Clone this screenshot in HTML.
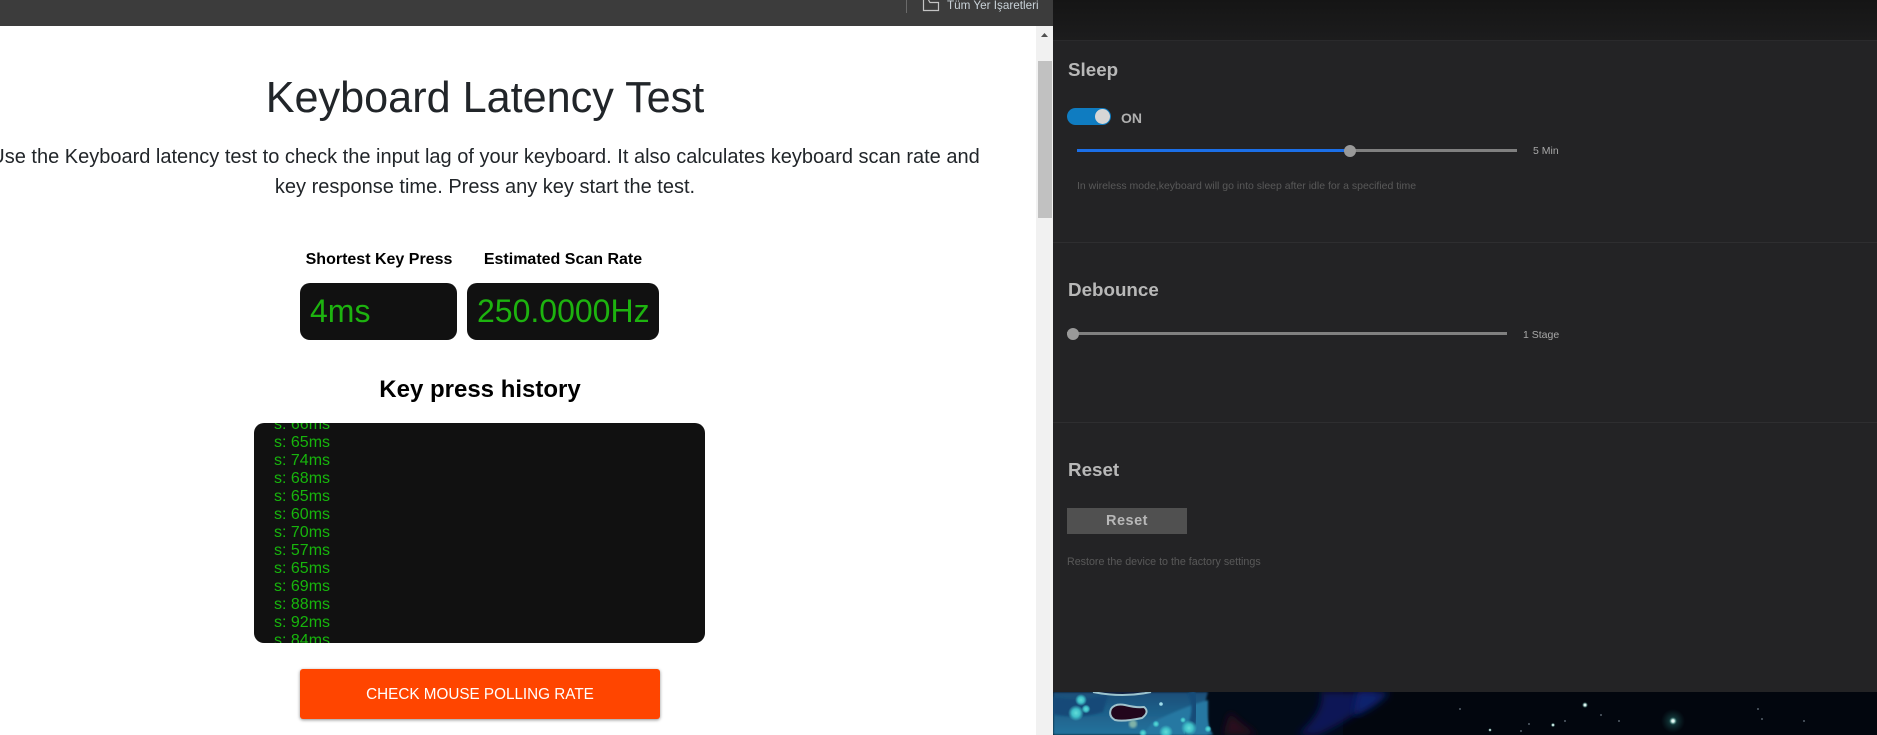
<!DOCTYPE html>
<html>
<head>
<meta charset="utf-8">
<style>
html,body{margin:0;padding:0;width:1877px;height:735px;overflow:hidden;background:#232325;font-family:"Liberation Sans",Arial,sans-serif}
.a{position:absolute;white-space:nowrap}
.c{position:absolute;white-space:nowrap;text-align:center}
.s{font-weight:bold;color:#b8b8b8;font-size:18.800px;line-height:22px;left:1068px}
.hint{color:#595959;font-size:10.500px;line-height:14px;left:1077px}
.val{color:#a8a8a8;font-size:10.500px;line-height:14px}
.line{position:absolute;left:1053px;right:0;height:1px;background:#2e2e30}
.h{color:#17b50c;font-size:16px;line-height:18px;left:274px}
</style>
</head>
<body>
<!-- browser toolbar -->
<div class="a" style="left:0;top:0;width:1053px;height:26px;background:#3c3c3c"></div>
<div class="a" style="left:906px;top:0;width:1px;height:13px;background:#6a6a6a"></div>
<svg class="a" style="left:922px;top:0" width="18" height="12" viewBox="0 0 18 12"><path d="M1.500 0V10.500H16.500V2.500H8L6.500 0" fill="none" stroke="#c4c4c4" stroke-width="1.200"/></svg>
<div class="a" style="left:947px;top:-2px;color:#c9d2d8;font-size:11.700px;line-height:16px">Tüm Yer İşaretleri</div>

<!-- white page -->
<div class="a" style="left:0;top:26px;width:1036px;height:709px;background:#fff;overflow:hidden"></div>
<div class="a" style="left:1036px;top:26px;width:17px;height:709px;background:#f1f1f1"></div>
<div class="a" style="left:1038px;top:61px;width:14px;height:157px;background:#c1c1c1"></div>
<svg class="a" style="left:1040px;top:32px" width="10" height="6"><path d="M4.500 1L8 5H1Z" fill="#505050"/></svg>

<div class="c" style="left:0;width:970px;top:70px;font-size:43.200px;line-height:56px;color:#212529">Keyboard Latency Test</div>
<div class="c" style="left:-20px;width:1010px;top:142px;font-size:20px;line-height:30px;color:#212529">Use the Keyboard latency test to check the input lag of your keyboard. It also calculates keyboard scan rate and</div>
<div class="c" style="left:-20px;width:1010px;top:172px;font-size:20px;line-height:30px;color:#212529">key response time. Press any key start the test.</div>

<div class="c" style="left:280px;width:198px;top:250px;font-size:16px;line-height:20px;font-weight:bold;color:#000">Shortest Key Press</div>
<div class="c" style="left:463px;width:200px;top:250px;font-size:16px;line-height:20px;font-weight:bold;color:#000">Estimated Scan Rate</div>

<div class="a" style="left:300px;top:283px;width:157px;height:57px;background:#111;border-radius:10px"></div>
<div class="a" style="left:467px;top:283px;width:192px;height:57px;background:#111;border-radius:10px"></div>
<div class="a" style="left:310px;top:292px;font-size:32px;line-height:38px;color:#1db30f">4ms</div>
<div class="a" style="left:477px;top:292px;font-size:32px;line-height:38px;color:#1db30f">250.0000Hz</div>

<div class="c" style="left:280px;width:400px;top:376px;font-size:24px;line-height:28px;font-weight:bold;color:#000">Key press history</div>

<div class="a" style="left:254px;top:423px;width:451px;height:220px;background:#111;border-radius:10px;overflow:hidden">
  <div class="a h" style="left:20px;top:-7px">s: 66ms</div>
  <div class="a h" style="left:20px;top:11px">s: 65ms</div>
  <div class="a h" style="left:20px;top:29px">s: 74ms</div>
  <div class="a h" style="left:20px;top:47px">s: 68ms</div>
  <div class="a h" style="left:20px;top:65px">s: 65ms</div>
  <div class="a h" style="left:20px;top:83px">s: 60ms</div>
  <div class="a h" style="left:20px;top:101px">s: 70ms</div>
  <div class="a h" style="left:20px;top:119px">s: 57ms</div>
  <div class="a h" style="left:20px;top:137px">s: 65ms</div>
  <div class="a h" style="left:20px;top:155px">s: 69ms</div>
  <div class="a h" style="left:20px;top:173px">s: 88ms</div>
  <div class="a h" style="left:20px;top:191px">s: 92ms</div>
  <div class="a h" style="left:20px;top:209px">s: 84ms</div>
</div>

<div class="c" style="left:300px;top:669px;width:360px;height:50px;line-height:51px;background:#ff4500;border-radius:3px;color:#fff;font-size:15.250px;box-shadow:0 1px 3px rgba(0,0,0,.45)">CHECK MOUSE POLLING RATE</div>

<!-- right panel -->
<div class="a" style="left:1053px;top:0;width:824px;height:41px;background:linear-gradient(#151515,#1c1c1d)"></div>
<div class="line" style="top:40px;background:#2a2a2c"></div>
<div class="a" style="left:1053px;top:41px;width:824px;height:651px;background:#232325"></div>
<div class="line" style="top:242px"></div>
<div class="line" style="top:422px"></div>

<div class="a s" style="top:59px">Sleep</div>
<div class="a" style="left:1067px;top:108px;width:44px;height:17px;border-radius:9px;background:#0f7cc1"></div>
<div class="a" style="left:1095px;top:109px;width:15px;height:15px;border-radius:50%;background:#d6d6d6"></div>
<div class="a" style="left:1121px;top:110px;font-size:14px;line-height:16px;font-weight:bold;color:#b0b0b0">ON</div>
<div class="a" style="left:1077px;top:149px;width:440px;height:3px;background:#808080"></div>
<div class="a" style="left:1077px;top:149px;width:273px;height:3px;background:#1b6fe8"></div>
<div class="a" style="left:1344px;top:145px;width:12px;height:12px;border-radius:50%;background:#999"></div>
<div class="a val" style="left:1533px;top:144px">5 Min</div>
<div class="a hint" style="top:179px">In wireless mode,keyboard will go into sleep after idle for a specified time</div>

<div class="a s" style="top:279px">Debounce</div>
<div class="a" style="left:1067px;top:332px;width:440px;height:3px;background:#808080"></div>
<div class="a" style="left:1067px;top:328px;width:12px;height:12px;border-radius:50%;background:#999"></div>
<div class="a val" style="left:1523px;top:328px">1 Stage</div>

<div class="a s" style="top:459px">Reset</div>
<div class="c" style="left:1067px;top:508px;width:120px;height:26px;line-height:27px;background:#505050;color:#b8b8b8;font-size:14.500px;font-weight:bold;letter-spacing:.5px">Reset</div>
<div class="a hint" style="left:1067px;top:555px;font-size:10.700px">Restore the device to the factory settings</div>

<!-- wallpaper strip -->
<svg class="a" style="left:1053px;top:692px" width="824" height="43" viewBox="0 0 824 43">
  <defs>
    <linearGradient id="b" x1="0" y1="0" x2="0" y2="1"><stop offset="0" stop-color="#1a4e78"/><stop offset="1" stop-color="#24749e"/></linearGradient>
    <radialGradient id="t"><stop offset="0" stop-color="#62dcd8"/><stop offset=".5" stop-color="#3fc0c8"/><stop offset="1" stop-color="#3fc0c8" stop-opacity="0"/></radialGradient>
    <radialGradient id="w"><stop offset="0" stop-color="#fff"/><stop offset=".35" stop-color="#cfeee8"/><stop offset="1" stop-color="#3a8a80" stop-opacity="0"/></radialGradient>
    <radialGradient id="h"><stop offset="0" stop-color="#2f8a84" stop-opacity=".55"/><stop offset="1" stop-color="#1c5d5a" stop-opacity="0"/></radialGradient>
    <filter id="f"><feGaussianBlur stdDeviation="4"/></filter>
    <filter id="g"><feGaussianBlur stdDeviation="1"/></filter>
  </defs>
  <rect width="824" height="43" fill="#02060e"/>
  <rect x="150" width="140" height="43" fill="#020b18"/>
  <path d="M0 0H155Q148 20 160 43H0Z" fill="url(#b)" filter="url(#g)"/>
  <path d="M0 5Q30 10 55 2L50 20Q25 28 0 22Z" fill="#164a78" filter="url(#g)"/>
  <path d="M100 30Q130 15 155 8L155 43H90Z" fill="#2878a2" filter="url(#g)"/>
  <path d="M138 0Q148 20 133 43" stroke="#174c78" stroke-width="7" fill="none" filter="url(#g)"/>
  <path d="M40 0Q70 6 98 0" stroke="#9cc4ce" stroke-width="2" fill="#0f1d3c"/>
  <path d="M58 17Q62 11 72 13Q84 16 91 15Q97 20 89 26Q70 30 62 28Q55 24 58 17Z" fill="#22061c" stroke="#9fc2cc" stroke-width="2"/>
  <circle cx="28" cy="8" r="6" fill="url(#t)"/>
  <circle cx="23" cy="21" r="8" fill="url(#t)"/>
  <circle cx="33" cy="17" r="4.500" fill="url(#t)"/>
  <circle cx="136" cy="36" r="8" fill="url(#t)"/>
  <circle cx="113" cy="40" r="7" fill="url(#t)"/>
  <circle cx="155" cy="37" r="3.500" fill="url(#t)"/>
  <circle cx="103" cy="32" r="3.500" fill="url(#t)"/>
  <circle cx="130" cy="28" r="3" fill="url(#t)"/>
  <circle cx="90" cy="41" r="4" fill="url(#t)"/>
  <circle cx="108" cy="12" r="1.800" fill="#9fdcea"/>
  <circle cx="80" cy="32" r="4" fill="#7fb2a8" filter="url(#g)"/>
  <path d="M177 20Q185 30 205 43H170Z" fill="#2a0c1c" filter="url(#f)"/>
  <path d="M268 0H325Q310 22 265 43H244Q272 20 268 0Z" fill="#0a1656" filter="url(#f)"/>
  <path d="M305 0H337Q320 18 300 24Z" fill="#0f206e" filter="url(#f)"/>
  <circle cx="620" cy="29" r="12" fill="url(#h)"/>
  <circle cx="532" cy="13" r="3" fill="url(#w)"/>
  <circle cx="620" cy="29" r="4" fill="url(#w)"/>
  <circle cx="500" cy="33" r="2.200" fill="url(#w)"/>
  <circle cx="437" cy="38" r="1.800" fill="url(#w)"/>
  <g fill="#54606a">
    <circle cx="407" cy="17" r="1"/><circle cx="468" cy="39" r="1"/><circle cx="512" cy="29" r="1"/>
    <circle cx="548" cy="23" r="1"/><circle cx="566" cy="29" r="1"/><circle cx="709" cy="27" r="1"/>
    <circle cx="751" cy="29" r="1"/><circle cx="705" cy="17" r="1"/><circle cx="476" cy="32" r="1"/>
  </g>
</svg>
</body>
</html>
